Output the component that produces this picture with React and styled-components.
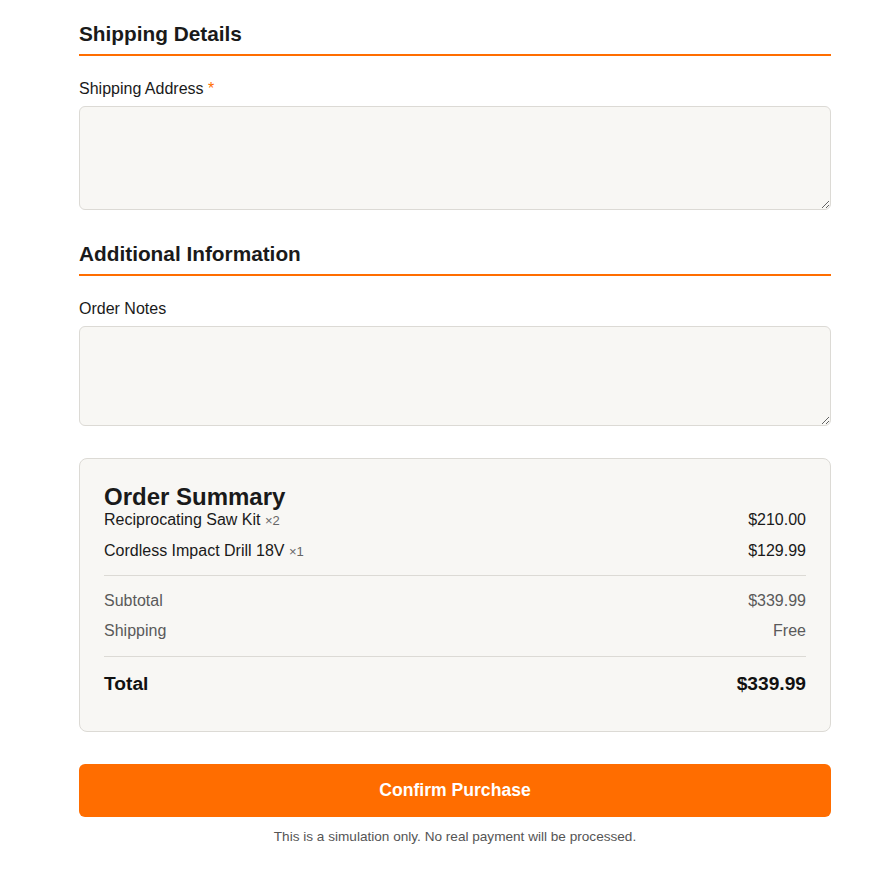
import React from "react";
import styled, { createGlobalStyle } from "styled-components";

const GlobalStyle = createGlobalStyle`
  body {
    margin: 0;
    background: #fff;
    font-family: "Liberation Sans", Arial, sans-serif;
    color: #1a1a1a;
  }
`;

const Page = styled.div`
  width: 752px;
  margin-left: 79px;
  padding: 22px 0 40px;
`;

const SectionTitle = styled.h2`
  margin: ${props => props.first ? "0" : "32px"} 0 24px;
  padding-bottom: 8px;
  border-bottom: 2px solid #ff6d00;
  font-size: 20.8px;
  line-height: 24px;
  font-weight: 700;
  color: #1a1a1a;
`;

const Label = styled.label`
  display: block;
  margin-bottom: 8px;
  font-size: 16px;
  line-height: 18px;
  color: #1a1a1a;
`;

const Req = styled.span`
  color: #ff6d00;
`;

const TextArea = styled.textarea`
  display: block;
  box-sizing: border-box;
  width: 100%;
  height: ${props => props.h}px;
  padding: 10px 12px;
  background: #f8f7f4;
  border: 1px solid #dcdad5;
  border-radius: 6px;
  font-family: inherit;
  font-size: 15px;
  resize: vertical;
  outline: none;
`;

const Card = styled.div`
  margin-top: 32px;
  padding: 24px;
  background: #f8f7f4;
  border: 1px solid #dcdad5;
  border-radius: 8px;
`;

const CardTitle = styled.h3`
  margin: 0;
  font-size: 24px;
  line-height: 28px;
  font-weight: 700;
  color: #1a1a1a;
`;

const Lines = styled.div`
  display: flex;
  flex-direction: column;
  gap: 12px;
  padding-top: ${props => props.top}px;
  padding-bottom: ${props => props.bottom}px;
  border-bottom: 1px solid #dcdad5;
`;

const Line = styled.div`
  display: flex;
  justify-content: space-between;
  font-size: 16px;
  line-height: 18px;
  color: ${props => props.muted ? "#5a5a5a" : "#1a1a1a"};
`;

const Qty = styled.span`
  font-size: 13px;
  color: #666;
`;

const TotalRow = styled.div`
  display: flex;
  justify-content: space-between;
  padding: 16px 0 12px;
  font-size: 19.2px;
  line-height: 22px;
  font-weight: 700;
  color: #111;
`;

const Button = styled.button`
  display: block;
  width: 100%;
  margin-top: 32px;
  padding: 16px;
  background: #ff6d00;
  color: #fff;
  border: none;
  border-radius: 6px;
  font-family: inherit;
  font-size: 17.6px;
  line-height: 21px;
  font-weight: 700;
  cursor: pointer;
`;

const Note = styled.p`
  margin: 12px 0 0;
  text-align: center;
  font-size: 13.6px;
  line-height: 16px;
  color: #555;
`;

const items = [
  { name: "Reciprocating Saw Kit", qty: 2, price: "$210.00" },
  { name: "Cordless Impact Drill 18V", qty: 1, price: "$129.99" },
];

export default function App() {
  return (
    <>
      <GlobalStyle />
      <Page>
        <SectionTitle first>Shipping Details</SectionTitle>
        <Label>Shipping Address <Req>*</Req></Label>
        <TextArea h={104} />

        <SectionTitle>Additional Information</SectionTitle>
        <Label>Order Notes</Label>
        <TextArea h={100} />

        <Card>
          <CardTitle>Order Summary</CardTitle>
          <Lines top={0} bottom={14}>
            {items.map(it => (
              <Line key={it.name}>
                <span>{it.name} <Qty>×{it.qty}</Qty></span>
                <span>{it.price}</span>
              </Line>
            ))}
          </Lines>
          <Lines top={16} bottom={16}>
            <Line muted><span>Subtotal</span><span>$339.99</span></Line>
            <Line muted><span>Shipping</span><span>Free</span></Line>
          </Lines>
          <TotalRow>
            <span>Total</span>
            <span>$339.99</span>
          </TotalRow>
        </Card>

        <Button>Confirm Purchase</Button>
        <Note>This is a simulation only. No real payment will be processed.</Note>
      </Page>
    </>
  );
}
